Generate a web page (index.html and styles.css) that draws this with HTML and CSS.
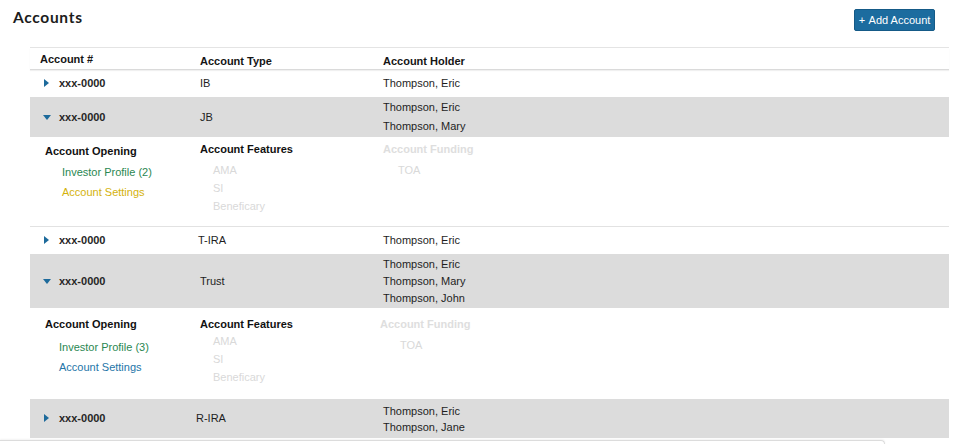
FILE: index.html
```html
<!DOCTYPE html>
<html lang="en">
<head>
<meta charset="utf-8">
<title>Accounts</title>
<link rel="stylesheet" href="styles.css">
</head>
<body>
<div class="page">
  <div class="topbar">
    <h1 class="title">Accounts</h1>
    <button class="btn-add" type="button"><span class="plus">+</span> Add Account</button>
  </div>

  <div class="table">
    <div class="thead">
      <div class="th th--first">Account #</div>
      <div class="th">Account Type</div>
      <div class="th">Account Holder</div>
    </div>

    <div class="row">
      <div class="cell-acct"><span class="caret caret--right"></span><span class="acct">xxx-0000</span></div>
      <div class="cell-type">IB</div>
      <div class="holders">Thompson, Eric</div>
    </div>

    <div class="row row--gray">
      <div class="cell-acct"><span class="caret caret--down"></span><span class="acct">xxx-0000</span></div>
      <div class="cell-type">JB</div>
      <div class="holders holders--19">Thompson, Eric<br>Thompson, Mary</div>
    </div>

    <div class="panel panel--a">
      <div class="pcol pcol--open">
        <div class="ph">Account Opening</div>
        <div class="plist plist--open">
          <a class="plink plink--green">Investor Profile (2)</a>
          <a class="plink plink--yellow">Account Settings</a>
        </div>
      </div>
      <div class="pcol pcol--feat">
        <div class="ph">Account Features</div>
        <div class="plist plist--feat">
          <span class="muted">AMA</span>
          <span class="muted">SI</span>
          <span class="muted">Beneficary</span>
        </div>
      </div>
      <div class="pcol pcol--fund">
        <div class="ph ph--muted">Account Funding</div>
        <div class="plist plist--fund">
          <span class="muted">TOA</span>
        </div>
      </div>
    </div>

    <div class="row">
      <div class="cell-acct"><span class="caret caret--right"></span><span class="acct">xxx-0000</span></div>
      <div class="cell-type cell-type--shift2">T-IRA</div>
      <div class="holders">Thompson, Eric</div>
    </div>

    <div class="row row--gray">
      <div class="cell-acct"><span class="caret caret--down"></span><span class="acct">xxx-0000</span></div>
      <div class="cell-type">Trust</div>
      <div class="holders holders--17">Thompson, Eric<br>Thompson, Mary<br>Thompson, John</div>
    </div>

    <div class="panel panel--b">
      <div class="pcol pcol--open">
        <div class="ph">Account Opening</div>
        <div class="plist plist--open">
          <a class="plink plink--green">Investor Profile (3)</a>
          <a class="plink plink--blue">Account Settings</a>
        </div>
      </div>
      <div class="pcol pcol--feat">
        <div class="ph">Account Features</div>
        <div class="plist plist--feat">
          <span class="muted">AMA</span>
          <span class="muted">SI</span>
          <span class="muted">Beneficary</span>
        </div>
      </div>
      <div class="pcol pcol--fund">
        <div class="ph ph--muted">Account Funding</div>
        <div class="plist plist--fund">
          <span class="muted">TOA</span>
        </div>
      </div>
    </div>

    <div class="row row--gray">
      <div class="cell-acct"><span class="caret caret--right"></span><span class="acct">xxx-0000</span></div>
      <div class="cell-type cell-type--shift4">R-IRA</div>
      <div class="holders holders--16">Thompson, Eric<br>Thompson, Jane</div>
    </div>
  </div>

  <div class="footbar"></div>
</div>
</body>
</html>
```

FILE: styles.css
```css
* { box-sizing: border-box; }

html, body {
  margin: 0;
  padding: 0;
  background: #fff;
  overflow: hidden;
}

body {
  font-family: "Liberation Sans", Arial, sans-serif;
  font-size: 11px;
  color: #1e1e1e;
}

.page {
  width: 954px;
  height: 444px;
}

.topbar {
  display: flex;
  justify-content: space-between;
  align-items: flex-start;
  height: 47px;
  padding: 9px 19px 0 13px;
}

.title {
  margin: 0;
  font-family: "Lato", "Open Sans", sans-serif;
  font-weight: 700;
  font-size: 15.5px;
  letter-spacing: 0.7px;
  line-height: 16px;
  color: #1c1c1c;
}

.btn-add {
  width: 81px;
  height: 22px;
  padding: 0;
  border: 1px solid #155a87;
  border-radius: 2px;
  background: #1c6c9f;
  color: #fff;
  font-family: "Liberation Sans", Arial, sans-serif;
  font-size: 11px;
  line-height: 20px;
  text-align: center;
}

.plus { margin-right: 1px; }

.table {
  margin: 0 5px 0 30px;
  border-top: 1px solid #e4e4e4;
}

.thead,
.row,
.panel {
  display: grid;
  grid-template-columns: 170px 183px 1fr;
}

.thead {
  height: 22px;
  border-bottom: 1px solid #dadada;
  box-shadow: 0 1px 1px rgba(0, 0, 0, 0.06);
  position: relative;
}

.th {
  font-weight: bold;
  line-height: 15px;
  padding-top: 6px;
  color: #151515;
}

.th--first {
  padding-left: 10px;
  padding-top: 4px;
}

.row {
  align-items: center;
  min-height: 27px;
  color: #1e1e1e;
}

.row--gray { background: #dcdcdc; }

.cell-acct {
  display: flex;
  align-items: center;
  padding-left: 13px;
}

.caret {
  display: block;
  width: 10px;
  height: 9px;
  position: relative;
}

.caret::after {
  content: "";
  position: absolute;
  width: 0;
  height: 0;
}

.caret--right::after {
  left: 1px;
  top: 0;
  border-top: 4px solid transparent;
  border-bottom: 4px solid transparent;
  border-left: 5px solid #1d6a9b;
}

.caret--down::after {
  left: 0;
  top: 2px;
  border-left: 4.5px solid transparent;
  border-right: 4.5px solid transparent;
  border-top: 5px solid #1d6a9b;
}

.acct {
  margin-left: 6px;
  font-weight: bold;
  line-height: 15px;
  color: #262626;
}

.cell-type { line-height: 15px; }
.cell-type--shift2 { margin-left: -2px; }
.cell-type--shift4 { margin-left: -4px; }

.holders { line-height: 15px; }
.holders--19 { line-height: 19px; padding: 1px 0; }
.holders--17 { line-height: 17px; padding: 1.5px 0; }
.holders--16 { line-height: 16px; padding: 3.5px 0; }

.panel {
  background: #fff;
}

.panel--a {
  height: 90px;
  border-bottom: 1px solid #e2e2e2;
}

.panel--b {
  height: 91px;
}

.pcol {
  display: flex;
  flex-direction: column;
}

.pcol--open { padding-left: 15px; }

.ph {
  font-weight: bold;
  line-height: 16px;
  color: #111;
}

.ph--muted { color: #dedede; }

.plist {
  display: flex;
  flex-direction: column;
  align-items: flex-start;
}

.plist--open { line-height: 20px; }
.plist--feat { line-height: 18px; padding-left: 13px; }
.plist--fund { line-height: 18px; padding-left: 15px; }

.muted { color: #d9d9d9; }

.plink { text-decoration: none; cursor: pointer; }
.plink--green { color: #2a8752; }
.plink--yellow { color: #d4b20c; }
.plink--blue { color: #2475a8; }

/* panel A offsets */
.panel--a .pcol--open { padding-top: 6px; }
.panel--a .plist--open { margin-top: 3px; padding-left: 17px; }
.panel--a .pcol--feat,
.panel--a .pcol--fund { padding-top: 4px; }
.panel--a .plist--feat,
.panel--a .plist--fund { margin-top: 4px; }

/* panel B offsets */
.panel--b .pcol--open { padding-top: 8px; }
.panel--b .plist--open { margin-top: 5px; padding-left: 14px; }
.panel--b .pcol--feat,
.panel--b .pcol--fund { padding-top: 8px; }
.panel--b .plist--feat { margin-top: 0; }
.panel--b .pcol--fund { margin-left: -3px; }
.panel--b .plist--fund { margin-top: 4px; padding-left: 20px; }

.footbar {
  margin-top: 2px;
  width: 885px;
  height: 10px;
  border: 1px solid #dcdcdc;
  border-left: none;
  border-bottom: none;
  border-top-right-radius: 4px;
  box-shadow: 0 -1px 2px rgba(0, 0, 0, 0.05);
}
```
